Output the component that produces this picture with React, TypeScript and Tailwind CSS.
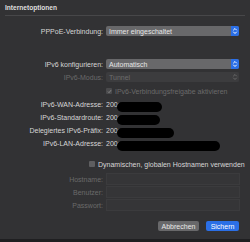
import React from 'react';

const Arrows = ({ dim }: { dim?: boolean }) => (
  <svg width="6" height="8" viewBox="0 0 6 8" fill="none" stroke={dim ? '#6a6a6a' : '#ffffff'} strokeWidth="1" strokeLinecap="round" strokeLinejoin="round">
    <path d="M1.5 3 L3 1.5 L4.5 3" />
    <path d="M1.5 5 L3 6.5 L4.5 5" />
  </svg>
);

function Select({ value, disabled }: { value: string; disabled?: boolean }) {
  return (
    <div
      className={
        'flex h-[10px] w-[133px] items-center rounded-[2px] ' +
        (disabled ? 'bg-[#3c3c3e] text-[#6c6c6c]' : 'bg-[#68686a] text-[#e6e6e6]')
      }
    >
      <span className="flex-1 pl-[3px] leading-none">{value}</span>
      <span
        className={
          'flex h-full w-[8px] items-center justify-center rounded-r-[2px] ' +
          (disabled ? 'bg-[#3c3c3e]' : 'bg-[#2b6fe6]')
        }
      >
        <Arrows dim={disabled} />
      </span>
    </div>
  );
}

function Row({ label, dim, children, className = '' }: { label: string; dim?: boolean; children: React.ReactNode; className?: string }) {
  return (
    <div className={'flex items-center ' + className}>
      <span className={'w-[103px] text-right leading-none ' + (dim ? 'text-[#6a6a6a]' : 'text-[#d6d6d6]')}>{label}</span>
      <div className="ml-[3px]">{children}</div>
    </div>
  );
}

function Redacted({ width, top }: { width: number; top: number }) {
  return (
    <div className="relative flex h-full items-center">
      <span className="leading-none text-[#d6d6d6]">200:</span>
      <span
        className="absolute left-[11px] h-[10px] rounded-full bg-black"
        style={{ width, top }}
      />
    </div>
  );
}

function Checkbox({ checked, dim }: { checked?: boolean; dim?: boolean }) {
  return (
    <span className={'flex h-[6px] w-[6px] items-center justify-center rounded-[1px] ' + (dim ? 'bg-[#4a4a4c]' : 'bg-[#5e5e60]')}>
      {checked && (
        <svg width="5" height="5" viewBox="0 0 5 5" fill="none" stroke="#8a8a8a" strokeWidth="0.9">
          <path d="M1 2.6 L2 3.7 L4 1.2" />
        </svg>
      )}
    </span>
  );
}

export default function App() {
  return (
    <div
      className="relative flex h-[242px] w-[250px] flex-col overflow-hidden bg-[#323234] text-[7px]"
      style={{ fontFamily: '"Liberation Sans", Arial, sans-serif' }}
    >
      <div className="h-[15px] pl-[5px] pt-[3px] text-[6.6px] font-bold leading-[10px] text-[#dedede]">Internetoptionen</div>
      <div className="mx-[5px] h-px bg-[#474749]" />

      <Row label="PPPoE-Verbindung:" className="mt-[10px] h-[10px]">
        <Select value="Immer eingeschaltet" />
      </Row>

      <Row label="IPv6 konfigurieren:" className="mt-[23px] h-[10px]">
        <Select value="Automatisch" />
      </Row>

      <Row label="IPv6-Modus:" dim className="mt-[3px] h-[10px]">
        <Select value="Tunnel" disabled />
      </Row>

      <div className="mt-[5px] flex h-[8px] items-center pl-[106px]">
        <Checkbox checked dim />
        <span className="ml-[3px] leading-none text-[#6a6a6a]">IPv6-Verbindungsfreigabe aktivieren</span>
      </div>

      <Row label="IPv6-WAN-Adresse:" className="mt-[4px] h-[10px]">
        <Redacted width={45} top={1} />
      </Row>
      <Row label="IPv6-Standardroute:" className="mt-[3px] h-[10px]">
        <Redacted width={43} top={1} />
      </Row>
      <Row label="Delegiertes IPv6-Präfix:" className="mt-[3px] h-[10px]">
        <Redacted width={57} top={1} />
      </Row>
      <Row label="IPv6-LAN-Adresse:" className="mt-[3px] h-[10px]">
        <Redacted width={103} top={1} />
      </Row>

      <div className="mt-[12px] flex h-[8px] items-center pl-[89px]">
        <Checkbox />
        <span className="ml-[3px] leading-none text-[#d6d6d6]">Dynamischen, globalen Hostnamen verwenden</span>
      </div>

      <div className="mt-[5px] flex flex-col gap-[1px]">
        {['Hostname:', 'Benutzer:', 'Passwort:'].map((l) => (
          <Row key={l} label={l} dim className="h-[12px]">
            <div className="h-[12px] w-[134px] border border-[#3b3b3d] bg-[#353537]" />
          </Row>
        ))}
      </div>

      <div className="mt-[10px] flex h-[10px] justify-end gap-[7px] pr-[11px]">
        <button className="flex h-[10px] w-[41px] items-center justify-center rounded-[2px] bg-[#68686a] leading-none text-[#e8e8e8]">
          Abbrechen
        </button>
        <button className="flex h-[10px] w-[33px] items-center justify-center rounded-[2px] bg-[#2b6fe6] leading-none text-white">
          Sichern
        </button>
      </div>

      <div className="mt-auto h-[3px] bg-[#1f1f21]" />
    </div>
  );
}
